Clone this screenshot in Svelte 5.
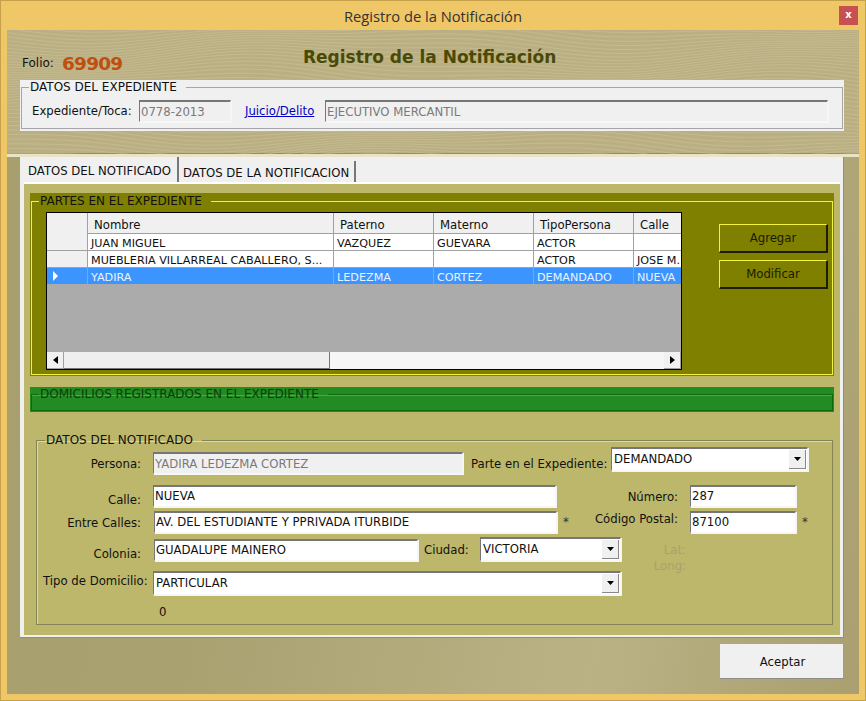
<script>
	// header band texture: long wavy lines
	const waves = []
	for (let i = 0; i < 44; i++) {
		let d = ''
		for (let x = 0; x <= 860; x += 20) {
			const y = i * 3.4 - 10 + 7 * Math.sin(x / 95 + i * 0.16) + 3 * Math.sin(x / 41 - i * 0.09)
			d += (x === 0 ? 'M' : 'L') + x + ' ' + y.toFixed(1)
		}
		waves.push(d)
	}

	const columns = ['Nombre', 'Paterno', 'Materno', 'TipoPersona', 'Calle']
	const rows = [
		{ cells: ['JUAN MIGUEL', 'VAZQUEZ', 'GUEVARA', 'ACTOR', ''] },
		{ cells: ['MUEBLERIA VILLARREAL CABALLERO, S...', '', '', 'ACTOR', 'JOSE M.'] },
		{ cells: ['YADIRA', 'LEDEZMA', 'CORTEZ', 'DEMANDADO', 'NUEVA'], selected: true }
	]
</script>

<div class="window">
	<div class="titlebar">
		<span>Registro de la Notificación</span>
		<div class="close">x</div>
	</div>

	<div class="client">
		<div class="header">
			<svg class="texture" width="852" height="125" viewBox="0 0 852 125" aria-hidden="true">
				{#each waves as d}
					<path {d} fill="none" stroke="#cfc69d" stroke-width="1" opacity="0.5" />
				{/each}
			</svg>
			<div class="heading">
				<div class="folio"><span class="folio-label">Folio:</span><span class="folio-num">69909</span></div>
				<h1>Registro de la Notificación</h1>
			</div>
			<div class="exp-box">
				<fieldset class="exp">
					<legend>DATOS DEL EXPEDIENTE</legend>
					<div class="exp-row">
						<label for="toca">Expediente/Toca:</label>
						<input id="toca" class="field off toca" readonly value="0778-2013" />
						<a href="#juicio">Juicio/Delito</a>
						<input class="field off juicio" readonly value="EJECUTIVO MERCANTIL" />
					</div>
				</fieldset>
			</div>
		</div>

		<div class="tabs">
			<div class="strip">
				<div class="tab active">DATOS DEL NOTIFICADO</div>
				<div class="tab">DATOS DE LA NOTIFICACION</div>
			</div>
			<div class="page">
				<div class="olive">
					<fieldset>
						<legend>PARTES EN EL EXPEDIENTE</legend>
						<div class="partes">
							<div class="grid">
								<div class="grow head">
									<div class="rh"></div>
									{#each columns as c}
										<div class="hc">{c}</div>
									{/each}
								</div>
								{#each rows as r}
									<div class="grow" class:selected={r.selected}>
										<div class="rh">
											{#if r.selected}
												<svg width="7" height="10" viewBox="0 0 7 10"><path d="M1 0l5 5-5 5z" fill="#fff" /></svg>
											{/if}
										</div>
										{#each r.cells as c}
											<div class="cell">{c}</div>
										{/each}
									</div>
								{/each}
								<div class="empty"></div>
								<div class="scroll">
									<div class="sbtn"><svg width="5" height="8" viewBox="0 0 5 8"><path d="M5 0v8L0 4z" fill="#000" /></svg></div>
									<div class="thumb"></div>
									<div class="track"></div>
									<div class="sbtn"><svg width="5" height="8" viewBox="0 0 5 8"><path d="M0 0v8l5-4z" fill="#000" /></svg></div>
								</div>
							</div>
							<div class="actions">
								<button>Agregar</button>
								<button>Modificar</button>
							</div>
						</div>
					</fieldset>
				</div>

				<div class="green">
					<fieldset>
						<legend>DOMICILIOS REGISTRADOS EN EL EXPEDIENTE</legend>
					</fieldset>
				</div>

				<fieldset class="notif">
					<legend>DATOS DEL NOTIFICADO</legend>
					<div class="row r1">
						<span class="lbl">Persona:</span>
						<input class="field off persona" readonly value="YADIRA LEDEZMA CORTEZ" />
						<span class="parte">Parte en el Expediente:</span>
						<div class="combo parte-combo"><span>DEMANDADO</span><i><svg width="7" height="4" viewBox="0 0 7 4"><path d="M0 0h7L3.5 4z" /></svg></i></div>
					</div>
					<div class="row r2">
						<span class="lbl">Calle:</span>
						<input class="field raised calle" readonly value="NUEVA" />
						<span class="lbl2">Número:</span>
						<input class="field raised num" readonly value="287" />
					</div>
					<div class="row r3">
						<span class="lbl">Entre Calles:</span>
						<input class="field raised entre" readonly value="AV. DEL ESTUDIANTE Y PPRIVADA ITURBIDE" />
						<span class="star">*</span>
						<span class="lbl2 cp">Código Postal:</span>
						<input class="field raised num" readonly value="87100" />
						<span class="star">*</span>
					</div>
					<div class="row r4">
						<span class="lbl">Colonia:</span>
						<input class="field raised colonia" readonly value="GUADALUPE MAINERO" />
						<span class="ciudad">Ciudad:</span>
						<div class="combo ciudad-combo"><span>VICTORIA</span><i><svg width="7" height="4" viewBox="0 0 7 4"><path d="M0 0h7L3.5 4z" /></svg></i></div>
						<div class="latlong"><span>Lat:</span><span>Long:</span></div>
					</div>
					<div class="row r5">
						<span class="lbl tipo">Tipo de Domicilio:</span>
						<div class="combo tipo-combo"><span>PARTICULAR</span><i><svg width="7" height="4" viewBox="0 0 7 4"><path d="M0 0h7L3.5 4z" /></svg></i></div>
					</div>
					<div class="zero">0</div>
				</fieldset>
			</div>
		</div>

		<div class="footer">
			<button class="accept">Aceptar</button>
		</div>
	</div>
</div>

<style>
	:global(body) {
		margin: 0;
		background: #f0c766;
	}
	.window {
		width: 866px;
		height: 701px;
		box-sizing: border-box;
		border: 1px solid #c5a24a;
		background: #f0c766;
		display: flex;
		flex-direction: column;
		font-family: "DejaVu Sans", sans-serif;
		font-size: 11.7px;
		color: #111;
		position: relative;
	}
	.titlebar {
		height: 29px;
		flex: none;
		display: flex;
		align-items: center;
		justify-content: center;
		font-family: "Open Sans", sans-serif;
		font-size: 14.7px;
		color: #333;
	}
	.close {
		position: absolute;
		top: 5px;
		right: 7px;
		width: 19px;
		height: 19px;
		background: #c75050;
		color: #fff;
		font: bold 10px/17px "DejaVu Sans", sans-serif;
		text-align: center;
	}
	.client {
		flex: 1;
		margin: 0 6px 6px;
		background: linear-gradient(100deg, #a89f6e 0%, #aaa171 30%, #bab285 72%, #a99f70 100%);
		display: flex;
		flex-direction: column;
	}
	.header {
		height: 127px;
		flex: none;
		box-sizing: border-box;
		position: relative;
		overflow: hidden;
		background: #b9af82;
		border-bottom: 3px solid #e9e4c6;
		box-shadow: inset 0 -1px 0 #8f8a70;
	}
	.texture {
		position: absolute;
		left: 0;
		top: 0;
	}
	.heading {
		position: relative;
		display: grid;
		grid-template-columns: 296px 1fr;
		height: 50px;
	}
	.folio {
		display: flex;
		align-items: center;
		padding: 23px 0 0 15px;
		height: 20px;
	}
	.folio-label {
		width: 40px;
		font-size: 12px;
	}
	.folio-num {
		font-size: 18.5px;
		font-weight: bold;
		letter-spacing: -0.8px;
		color: #bf4f0e;
	}
	h1 {
		margin: 0;
		padding-top: 16px;
		font-size: 17px;
		line-height: 22px;
		font-weight: bold;
		color: #4a4a06;
	}
	.exp-box {
		position: relative;
		margin-left: 13px;
		width: 824px;
		height: 51px;
		box-sizing: border-box;
		padding: 0 1px 2px;
		background: #f0f0f0;
	}
	fieldset {
		margin: 0;
		padding: 0;
		min-width: 0;
		box-sizing: border-box;
	}
	legend {
		padding: 0 9px 0 1px;
		margin-left: 7px;
		line-height: 14px;
		font-size: 12px;
	}
	.exp {
		height: 49px;
		border: 1px solid #a6a6a6;
	}
	.exp-row {
		display: flex;
		align-items: center;
		padding: 6px 0 0 10px;
	}
	.exp-row label {
		width: 107px;
	}
	.exp-row a {
		margin: 0 11px 0 14px;
		color: #0000c8;
		width: 69px;
		white-space: nowrap;
	}
	.field {
		box-sizing: border-box;
		height: 22px;
		margin: 0;
		padding: 0 0 0 1px;
		border-style: solid;
		border-width: 2px 1px 1px 1px;
		border-color: #767676 #f6f6f6 #f6f6f6 #767676;
		background: #fff;
		font: inherit;
		color: #111;
		outline: none;
		box-shadow: 1px 1px 0 #f6f6f6;
	}
	.raised {
		padding-bottom: 2px;
	}
	.off {
		background: #f0f0f0;
		color: #7a7a7a;
	}
	.toca {
		width: 92px;
	}
	.juicio {
		width: 503px;
	}
	.tabs {
		margin-left: 13px;
		width: 824px;
		height: 481px;
		flex: none;
		box-sizing: border-box;
		display: flex;
		flex-direction: column;
		background: #f0f0f0;
		border-right: 1px solid #8c8c8c;
		border-bottom: 1px solid #8c8c8c;
	}
	.strip {
		height: 25px;
		flex: none;
		display: flex;
		align-items: flex-end;
		padding-left: 1px;
	}
	.tab {
		height: 21px;
		box-sizing: border-box;
		padding: 5px 4px 0 4px;
		width: 177px;
		border-right: 2px solid #777;
		white-space: nowrap;
	}
	.tab.active {
		height: 25px;
		width: 158px;
		padding: 7px 6px 0 7px;
		background: #f0f0f0;
	}
	.page {
		flex: 1;
		margin: 0 3px 2px 4px;
		background: #bdb76b;
		border-top: 2px solid #fff;
		padding: 9px 6px 0;
		display: flex;
		flex-direction: column;
	}
	.olive {
		background: #808000;
		height: 183px;
		flex: none;
		box-sizing: border-box;
		padding: 1px 1px 1px;
	}
	.olive fieldset {
		height: 100%;
		border: 1px solid #f2f23c;
	}
	.partes {
		display: flex;
		align-items: flex-start;
		padding: 4px 0 0 14px;
	}
	.grid {
		width: 636px;
		height: 158px;
		box-sizing: border-box;
		border: 1px solid #000;
		background: #ababab;
		display: flex;
		flex-direction: column;
		overflow: hidden;
		font-size: 11.2px;
	}
	.grow {
		display: grid;
		grid-template-columns: 41px 246px 100px 100px 100px 47px;
		height: 16px;
		flex: none;
		background: #fff;
		border-bottom: 1px solid #a0a0a0;
		box-sizing: content-box;
		line-height: 20px;
	}
	.grow.head {
		height: 20px;
		background: #f0f0f0;
		line-height: 24px;
		font-size: 11.7px;
	}
	.grow.selected {
		background: #3c94ff;
		color: #e9f3ff;
		border-bottom: none;
	}
	.rh {
		background: #f0f0f0;
		border-right: 1px solid #a0a0a0;
		display: flex;
		align-items: center;
		padding-left: 5px;
	}
	.selected .rh {
		background: #3c94ff;
	}
	.hc {
		padding-left: 6px;
		border-right: 1px solid #a0a0a0;
	}
	.cell {
		padding-left: 3px;
		border-right: 1px solid #a0a0a0;
		white-space: nowrap;
		overflow: hidden;
	}
	.hc:last-child,
	.cell:last-child {
		border-right: none;
	}
	.empty {
		flex: 1;
	}
	.scroll {
		height: 17px;
		flex: none;
		display: flex;
		background: #f6f6f6;
	}
	.sbtn {
		width: 17px;
		flex: none;
		box-sizing: border-box;
		background: #f0f0f0;
		border-right: 1px solid #a0a0a0;
		border-bottom: 1px solid #a0a0a0;
		display: flex;
		align-items: center;
		justify-content: center;
	}
	.thumb {
		width: 266px;
		flex: none;
		box-sizing: border-box;
		background: #efefef;
		border-right: 1px solid #777;
		border-bottom: 1px solid #777;
	}
	.track {
		flex: 1;
	}
	.actions {
		margin: 12px 0 0 37px;
		display: flex;
		flex-direction: column;
		gap: 7px;
	}
	.actions button {
		width: 109px;
		height: 29px;
		box-sizing: border-box;
		background: #808000;
		border-style: solid;
		border-width: 1px 2px 2px 1px;
		border-color: #f2f23c #1c1c00 #1c1c00 #f2f23c;
		font: inherit;
		color: #1a1a00;
		padding: 0;
	}
	.green {
		margin-top: 11px;
		background: #228b22;
		height: 25px;
		flex: none;
		box-sizing: border-box;
		padding: 0 1px 1px;
	}
	.green fieldset {
		height: 100%;
		border: 1px solid #0f6a0f;
		box-shadow: inset 0 1px 0 #45ad45;
	}
	.green legend {
		color: #0c3d0c;
	}
	.notif {
		margin: 21px 1px 0 6px;
		height: 192px;
		border: 1px solid #85835a;
		box-shadow: inset 1px 1px 0 #dcd8a0;
		padding: 0 0 0 6px;
		flex: none;
	}
	.notif legend {
		margin-left: 2px;
	}
	.row {
		display: flex;
		align-items: flex-start;
		position: relative;
	}
	.r1 {
		height: 38px;
	}
	.r2 {
		height: 26px;
	}
	.r3 {
		height: 26px;
	}
	.r4 {
		height: 34px;
	}
	.r5 {
		height: 23px;
	}
	.lbl {
		width: 98px;
		margin-right: 12px;
		text-align: right;
		line-height: 16px;
		white-space: nowrap;
		flex: none;
	}
	.r1 .lbl {
		margin-top: 9px;
	}
	.r2 .lbl {
		margin-top: 7px;
	}
	.r3 .lbl {
		margin-top: 4px;
	}
	.r4 .lbl {
		margin-top: 9px;
	}
	.r5 .lbl {
		margin-top: 2px;
	}
	.lbl.tipo {
		width: 104px;
		margin-right: 6px;
	}
	.persona {
		width: 310px;
		margin-top: 5px;
	}
	.parte {
		margin: 9px 0 0 8px;
		width: 140px;
		white-space: nowrap;
		line-height: 16px;
	}
	.combo {
		box-sizing: border-box;
		height: 24px;
		background: #fff;
		border-style: solid;
		border-width: 2px 1px 1px 1px;
		border-color: #767676 #f6f6f6 #f6f6f6 #767676;
		display: flex;
		align-items: center;
		justify-content: space-between;
		padding-left: 2px;
		box-shadow: 1px 1px 0 #f6f6f6;
		flex: none;
	}
	.combo span {
		padding-bottom: 2px;
	}
	.combo i {
		width: 17px;
		height: 19px;
		margin-right: 1px;
		box-sizing: border-box;
		background: #f0f0f0;
		border-right: 1px solid #888;
		border-bottom: 1px solid #888;
		display: flex;
		align-items: center;
		justify-content: center;
	}
	.parte-combo {
		width: 197px;
	}
	.ciudad-combo {
		width: 141px;
	}
	.tipo-combo {
		width: 468px;
	}
	.calle {
		width: 403px;
	}
	.num {
		width: 106px;
	}
	.lbl2 {
		width: 122px;
		text-align: right;
		margin-right: 12px;
		line-height: 16px;
		margin-top: 4px;
		flex: none;
	}
	.entre {
		width: 403px;
		margin-left: 1px;
	}
	.star {
		width: 6px;
		margin: 3px 0 0 6px;
		line-height: 16px;
		color: #333;
	}
	.lbl2.cp {
		width: 109px;
		margin-top: 0;
	}
	.colonia {
		width: 264px;
		margin: 2px 0 0 1px;
	}
	.ciudad {
		margin: 5px 13px 0 6px;
		width: 43px;
		line-height: 16px;
	}
	.latlong {
		margin: 5px 0 0 42px;
		width: 23px;
		display: flex;
		flex-direction: column;
		align-items: flex-end;
		line-height: 16px;
		color: #a8a36a;
	}
	.zero {
		margin: 10px 0 0 116px;
		line-height: 16px;
	}
	.footer {
		display: flex;
		justify-content: flex-end;
		padding: 6px 15px 0 0;
	}
	.accept {
		width: 124px;
		height: 35px;
		background: #f0f0f0;
		border: none;
		border-bottom: 1px solid #8c8c8c;
		border-right: 1px solid #9c9c9c;
		font: inherit;
		color: #111;
		padding: 2px 0 0 2px;
	}
</style>
